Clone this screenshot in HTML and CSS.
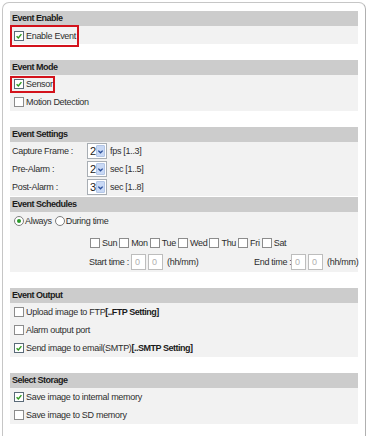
FILE: index.html
```html
<!DOCTYPE html>
<html lang="en">
<head>
  <meta charset="UTF-8">
  <title>Event Settings</title>
  <link rel="stylesheet" href="styles.css">
</head>
<body>
  <div class="panel">

    <div class="section">
      <div class="head">Event Enable</div>
      <div class="body">
        <div class="row">
          <span class="mark mark-enable">
            <span class="cb on"><svg viewBox="0 0 10 10"><path d="M2 5.2 L4.2 7.4 L8 2.6" /></svg></span>Enable Event
          </span>
        </div>
      </div>
    </div>

    <div class="section">
      <div class="head">Event Mode</div>
      <div class="body">
        <div class="row">
          <span class="mark mark-sensor">
            <span class="cb on"><svg viewBox="0 0 10 10"><path d="M2 5.2 L4.2 7.4 L8 2.6" /></svg></span>Sensor
          </span>
        </div>
        <div class="row"><span class="cb"></span>Motion Detection</div>
      </div>
    </div>

    <div class="section">
      <div class="head">Event Settings</div>
      <div class="body">
        <div class="row row-set">
          <span class="lbl">Capture Frame :</span>
          <span class="sel"><span class="val">2</span><span class="arr"><svg viewBox="0 0 8 8"><path d="M1.5 3 L4 5.5 L6.5 3" /></svg></span></span>
          <span class="unit">fps [1..3]</span>
        </div>
        <div class="row row-set">
          <span class="lbl">Pre-Alarm :</span>
          <span class="sel"><span class="val">2</span><span class="arr"><svg viewBox="0 0 8 8"><path d="M1.5 3 L4 5.5 L6.5 3" /></svg></span></span>
          <span class="unit">sec [1..5]</span>
        </div>
        <div class="row row-set">
          <span class="lbl">Post-Alarm :</span>
          <span class="sel"><span class="val">3</span><span class="arr"><svg viewBox="0 0 8 8"><path d="M1.5 3 L4 5.5 L6.5 3" /></svg></span></span>
          <span class="unit">sec [1..8]</span>
        </div>
      </div>
      <div class="head head-tight">Event Schedules</div>
      <div class="body">
        <div class="row">
          <span class="rb on"></span>Always
          <span class="rb rb-2"></span>During time
        </div>
        <div class="days">
          <span class="cb"></span><span class="day">Sun</span>
          <span class="cb"></span><span class="day">Mon</span>
          <span class="cb"></span><span class="day">Tue</span>
          <span class="cb"></span><span class="day">Wed</span>
          <span class="cb"></span><span class="day">Thu</span>
          <span class="cb"></span><span class="day">Fri</span>
          <span class="cb"></span><span class="day">Sat</span>
        </div>
        <div class="times">
          <div class="tgroup">
            <span class="tlbl">Start time :</span>
            <span class="tin">0</span><span class="tin">0</span>
            <span class="hint">(hh/mm)</span>
          </div>
          <div class="tgroup">
            <span class="tlbl">End time :</span>
            <span class="tin">0</span><span class="tin">0</span>
            <span class="hint">(hh/mm)</span>
          </div>
        </div>
      </div>
    </div>

    <div class="section">
      <div class="head">Event Output</div>
      <div class="body">
        <div class="row"><span class="cb"></span>Upload image to FTP<b>[..FTP Setting]</b></div>
        <div class="row"><span class="cb"></span>Alarm output port</div>
        <div class="row"><span class="cb on"><svg viewBox="0 0 10 10"><path d="M2 5.2 L4.2 7.4 L8 2.6" /></svg></span>Send image to email(SMTP)<b>[..SMTP Setting]</b></div>
      </div>
    </div>

    <div class="section">
      <div class="head">Select Storage</div>
      <div class="body">
        <div class="row"><span class="cb on"><svg viewBox="0 0 10 10"><path d="M2 5.2 L4.2 7.4 L8 2.6" /></svg></span>Save image to internal memory</div>
        <div class="row"><span class="cb"></span>Save image to SD memory</div>
      </div>
    </div>

  </div>
</body>
</html>
```

FILE: styles.css
```css
* {
  box-sizing: border-box;
}

body {
  margin: 0;
  background: #fff;
  font-family: "Liberation Sans", Arial, sans-serif;
  font-size: 9px;
  letter-spacing: -0.3px;
  color: #2e2e2e;
  overflow: hidden;
}

.panel {
  margin: 2px 2px 0 2px;
  height: 440px;
  padding: 8px 7px 0;
  border: 1px solid #c6c6c6;
  border-bottom: none;
  border-right-color: #b0b0b0;
  border-radius: 7px 7px 0 0;
}

.section {
  margin-bottom: 16px;
}

.head {
  height: 15px;
  line-height: 15px;
  padding-left: 2px;
  background: #cccccc;
  font-weight: bold;
  letter-spacing: -0.5px;
  color: #1b1b1b;
}

.head-tight {
  margin-top: 1px;
}

.body {
  background: #f2f2f2;
}

.row {
  height: 18px;
  display: flex;
  align-items: center;
  padding-left: 4px;
  white-space: nowrap;
}

.row b {
  letter-spacing: -0.5px;
  color: #1b1b1b;
}

/* checkbox */
.cb {
  width: 10px;
  height: 10px;
  flex: none;
  margin-right: 2px;
  border: 1px solid #8c8c8c;
  background: #fff;
  display: inline-flex;
}

.cb.on {
  border-color: #5a6a78;
}

.cb svg {
  width: 8px;
  height: 8px;
  fill: none;
  stroke: #2f9a1f;
  stroke-width: 1.8;
}

/* radio */
.rb {
  width: 10px;
  height: 10px;
  flex: none;
  margin-right: 1px;
  border: 1px solid #7d7d7d;
  border-radius: 50%;
  background: #fff;
  display: inline-flex;
  align-items: center;
  justify-content: center;
}

.rb.on::after {
  content: "";
  width: 4px;
  height: 4px;
  border-radius: 50%;
  background: #2a9a2a;
}

.rb-2 {
  margin-left: 3px;
}

/* red annotation boxes */
.mark {
  display: inline-flex;
  align-items: center;
  margin-left: -4px;
  padding-left: 2px;
  border: 2px solid #d3121b;
}

.mark-enable {
  height: 22px;
  width: 69px;
  margin-top: -1px;
  margin-bottom: -3px;
}

.mark-sensor {
  height: 17px;
  width: 45px;
}

/* settings */
.row-set {
  padding-left: 2px;
}

.lbl {
  width: 75px;
}

.sel {
  width: 20px;
  height: 16px;
  display: inline-flex;
  align-items: center;
  border: 1px solid #a8aeb4;
  background: #fff;
}

.val {
  flex: 1;
  padding-left: 2px;
  font-size: 11px;
  color: #1b1b1b;
}

.arr {
  width: 9px;
  height: 12px;
  margin-right: 1px;
  display: inline-flex;
  align-items: center;
  justify-content: center;
  background: #c9d9f5;
  border: 1px solid #b3c6e6;
  border-radius: 1px;
}

.arr svg {
  width: 7px;
  height: 7px;
  fill: none;
  stroke: #2b4f9a;
  stroke-width: 1.6;
}

.unit {
  margin-left: 3px;
}

/* schedules */
.days {
  height: 18px;
  margin-top: 4px;
  padding-left: 80px;
  display: flex;
  align-items: center;
}

.day {
  margin-right: 2px;
}

.times {
  height: 20px;
  padding-left: 79px;
  display: flex;
  align-items: center;
  white-space: nowrap;
}

.tgroup {
  width: 165px;
  flex: none;
  display: flex;
  align-items: center;
}

.tgroup + .tgroup {
  width: auto;
}

.tlbl {
  width: 42px;
}

.tgroup + .tgroup .tlbl {
  width: 37px;
}

.tin {
  width: 15px;
  height: 16px;
  margin-right: 2px;
  padding-left: 3px;
  line-height: 14px;
  border: 1px solid #bdbdbd;
  background: #fff;
  color: #b0b0b0;
}

.hint {
  margin-left: 2px;
}
```
